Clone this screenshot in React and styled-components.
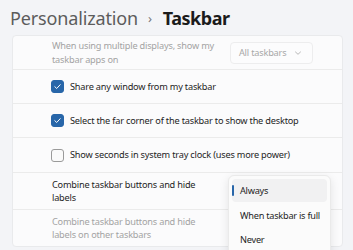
import React from 'react';
import styled, { createGlobalStyle } from 'styled-components';

const GlobalStyle = createGlobalStyle`
  html, body {
    margin: 0;
    padding: 0;
    background: #f3f4f7;
    font-family: "Noto Sans", "Open Sans", sans-serif;
    overflow: hidden;
  }
`;

const Page = styled.div`
  position: relative;
  width: 353px;
  height: 250px;
  overflow: hidden;
`;

const Header = styled.h1`
  margin: 0;
  height: 35px;
  padding-left: 10px;
  display: flex;
  align-items: center;
  font-size: 18px;
  font-weight: 400;
  color: #5c5c5c;
  letter-spacing: -0.15px;
`;

const Crumb = styled.span`
  font-size: 13px;
  margin: 0 11px 0 10px;
  color: #777;
`;

const Current = styled.span`
  font-weight: 700;
  color: #1b1b1b;
  letter-spacing: -0.5px;
`;

const Card = styled.div`
  margin-left: 12px;
  width: 331px;
  background: #fbfbfc;
  border: 1px solid #e9eaec;
  border-radius: 4px;
  box-sizing: border-box;
  overflow: hidden;
`;

const Row = styled.div`
  height: ${p => p.h}px;
  box-sizing: border-box;
  display: flex;
  align-items: center;
  padding-left: ${p => p.indent || 39}px;
  border-top: ${p => (p.first ? 'none' : '1px solid #ebebeb')};
  gap: 6px;
`;

const Label = styled.div`
  font-size: 9.2px;
  letter-spacing: -0.2px;
  line-height: 13.3px;
  color: ${p => (p.disabled ? '#a3a3a3' : '#1e1e1e')};
  width: ${p => (p.w ? `${p.w}px` : 'auto')};
`;

const Select = styled.div`
  margin-left: auto;
  margin-right: 29px;
  width: 86px;
  height: 22px;
  box-sizing: border-box;
  border: 1px solid #ededee;
  border-radius: 4px;
  display: flex;
  align-items: center;
  justify-content: space-between;
  padding: 0 10px 0 8px;
  font-size: 9.2px;
  letter-spacing: -0.2px;
  color: #a8a8a8;
  background: #fcfcfd;
`;

const Check = styled.span`
  width: 13px;
  height: 13px;
  box-sizing: border-box;
  border-radius: 3px;
  flex-shrink: 0;
  display: flex;
  align-items: center;
  justify-content: center;
  background: ${p => (p.on ? '#2866a9' : '#fafafa')};
  border: 1px solid ${p => (p.on ? '#2866a9' : '#9a9a9a')};
`;

const Menu = styled.div`
  position: absolute;
  left: 228px;
  top: 175px;
  width: 103px;
  height: 90px;
  background: #fbfbfb;
  border: 1px solid #eaeaea;
  border-radius: 6px;
  box-shadow: 0 3px 10px rgba(0, 0, 0, 0.10);
  box-sizing: border-box;
  padding: 3px 3px;
  display: flex;
  flex-direction: column;
  gap: 1px;
`;

const Item = styled.div`
  position: relative;
  height: 23px;
  display: flex;
  align-items: center;
  padding-left: 8px;
  border-radius: 4px;
  font-size: 9.2px;
  letter-spacing: -0.25px;
  white-space: nowrap;
  color: #1e1e1e;
  background: ${p => (p.active ? '#f1f1f2' : 'transparent')};
  margin-bottom: ${p => (p.active ? '1px' : '0')};
  &::before {
    content: '';
    display: ${p => (p.active ? 'block' : 'none')};
    position: absolute;
    left: 0;
    top: 6px;
    width: 2px;
    height: 11px;
    border-radius: 1px;
    background: #2866a9;
  }
`;

const Tick = () => (
  <svg width="9" height="9" viewBox="0 0 10 10">
    <path d="M2 5.2 L4.1 7.2 L8 3" fill="none" stroke="#fff" strokeWidth="1.1" strokeLinecap="round" strokeLinejoin="round" />
  </svg>
);

const Chevron = () => (
  <svg width="8" height="6" viewBox="0 0 8 6">
    <path d="M1.5 2 L4 4.3 L6.5 2" fill="none" stroke="#b0b0b0" strokeWidth="0.9" strokeLinecap="round" />
  </svg>
);

const checks = [
  { text: 'Share any window from my taskbar', on: true },
  { text: 'Select the far corner of the taskbar to show the desktop', on: true },
  { text: 'Show seconds in system tray clock (uses more power)', on: false },
];

function App() {
  return (
    <Page>
      <GlobalStyle />
      <Header>
        Personalization<Crumb>›</Crumb><Current>Taskbar</Current>
      </Header>
      <Card>
        <Row first h={33}>
          <Label disabled w={180}>When using multiple displays, show my taskbar apps on</Label>
          <Select>
            All taskbars
            <Chevron />
          </Select>
        </Row>
        {checks.map((c, i) => (
          <Row key={i} h={i === 2 ? 35 : 34} indent={38}>
            <Check on={c.on}>{c.on && <Tick />}</Check>
            <Label>{c.text}</Label>
          </Row>
        ))}
        <Row h={37}>
          <Label w={150}>Combine taskbar buttons and hide labels</Label>
        </Row>
        <Row h={37}>
          <Label disabled w={150}>Combine taskbar buttons and hide labels on other taskbars</Label>
        </Row>
      </Card>
      <Menu>
        <Item active>Always</Item>
        <Item>When taskbar is full</Item>
        <Item>Never</Item>
      </Menu>
    </Page>
  );
}

export default App;
